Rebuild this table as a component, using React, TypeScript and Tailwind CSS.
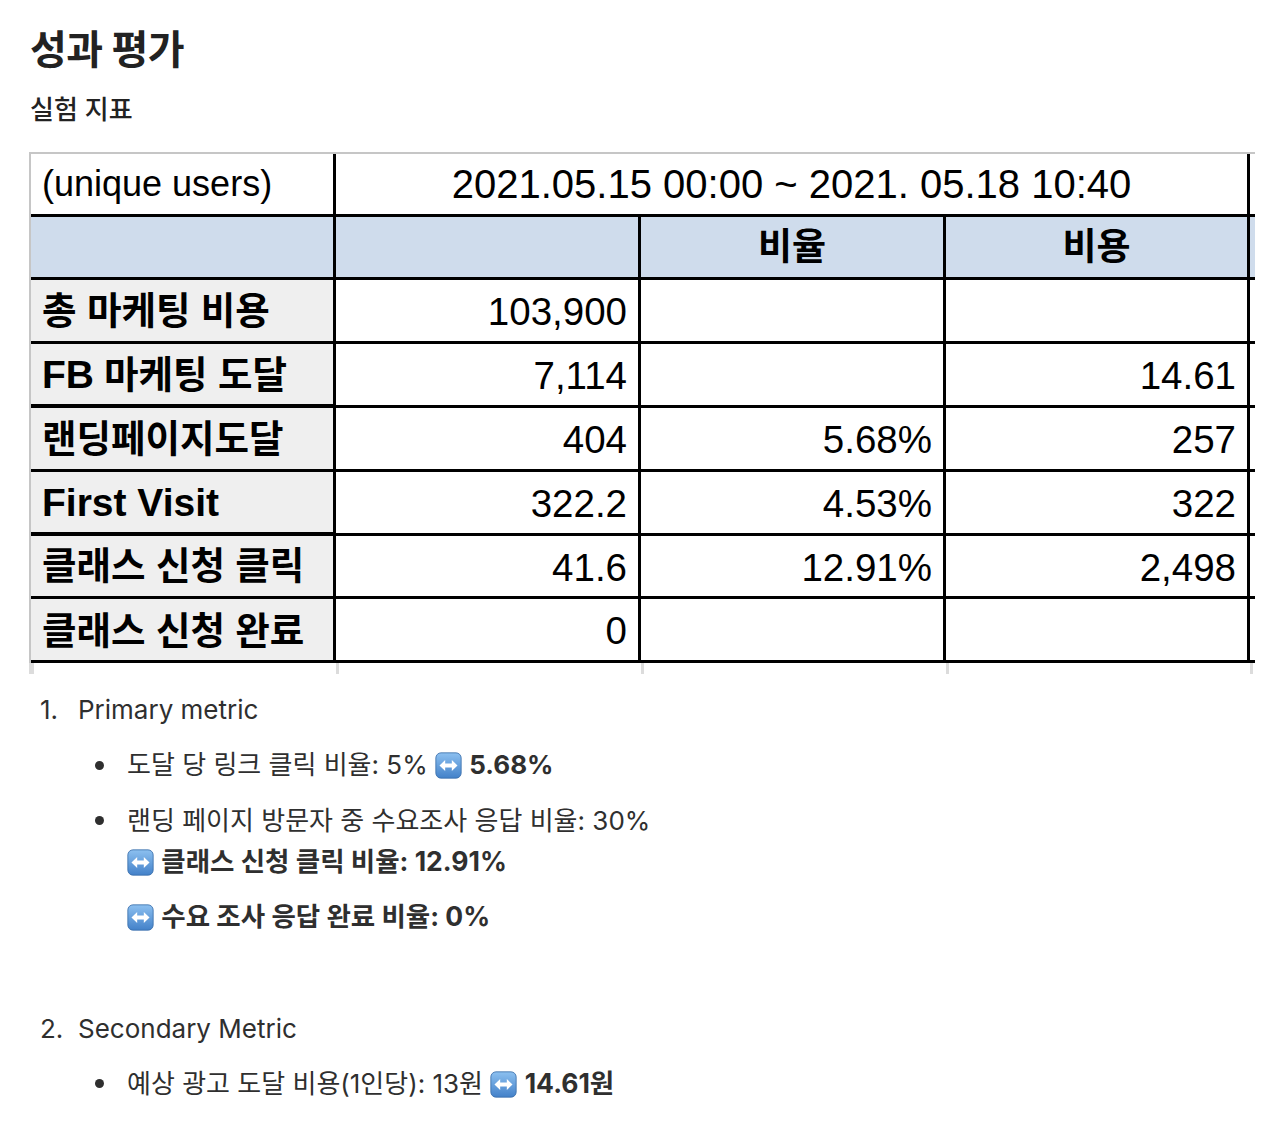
import React from 'react'

const body = { fontFamily: 'Inter, "Noto Sans CJK KR", sans-serif' }
const sheet = { fontFamily: '"Liberation Sans", "Noto Sans CJK KR", Arial, sans-serif' }

function SwapIcon() {
  return (
    <svg viewBox="0 0 26 26" className="inline-block h-[27px] w-[27px] align-[-5px]">
      <defs>
        <linearGradient id="swapBlue" x1="0" y1="0" x2="0" y2="1">
          <stop offset="0" stopColor="#8cc0f0" />
          <stop offset="1" stopColor="#4381c9" />
        </linearGradient>
      </defs>
      <rect x="0.8" y="0.8" width="24.4" height="24.4" rx="5" fill="url(#swapBlue)" stroke="#3a6eab" strokeWidth="0.8" />
      <path d="M4.3 13 L9.8 7.8 V11.1 H16.2 V7.8 L21.7 13 L16.2 18.2 V14.9 H9.8 V18.2 Z" fill="#fff" />
    </svg>
  )
}

const rows: { label: React.ReactNode; a: string; b: string; c: string }[] = [
  { label: '총 마케팅 비용', a: '103,900', b: '', c: '' },
  {
    label: (
      <>
        <span className="mr-[10px] text-[39px]">FB</span>
        <span>마케팅 도달</span>
      </>
    ),
    a: '7,114',
    b: '',
    c: '14.61',
  },
  { label: '랜딩페이지도달', a: '404', b: '5.68%', c: '257' },
  { label: <span className="text-[39px]">First Visit</span>, a: '322.2', b: '4.53%', c: '322' },
  { label: '클래스 신청 클릭', a: '41.6', b: '12.91%', c: '2,498' },
  { label: '클래스 신청 완료', a: '0', b: '', c: '' },
]

const rowHeights = ['h-[61px]', 'h-[60px]', 'h-[61px]', 'h-[60px]', 'h-[60px]', 'h-[61px]']

function Num({ v }: { v: string }) {
  return (
    <div className="flex items-center justify-end bg-white pr-[11px] pt-[3px] text-[38.5px] text-black">{v}</div>
  )
}

function MetricsSheet() {
  return (
    <div className="ml-[-1px] w-[1226px]" style={sheet}>
      <div className="border-l-2 border-t-2 border-[#c6c6c6]">
        <div className="grid grid-cols-[302px_302px_302px_301px_5px] gap-[3px] bg-black pb-[3px]">
          <div className="flex h-[60px] items-center bg-white pl-[11px] text-[36px] text-black">(unique users)</div>
          <div className="col-span-3 flex items-center justify-center bg-white text-[40px] text-black">
            2021.05.15 00:00 ~ 2021. 05.18 10:40
          </div>
          <div className="bg-white" />

          <div className="h-[60px] bg-[#cfdcec]" />
          <div className="bg-[#cfdcec]" />
          <div className="flex items-center justify-center bg-[#cfdcec] pt-[2px] text-[37px] font-bold text-black">
            비율
          </div>
          <div className="flex items-center justify-center bg-[#cfdcec] pt-[2px] text-[37px] font-bold text-black">
            비용
          </div>
          <div className="bg-[#cfdcec]" />

          {rows.map((r, i) => (
            <React.Fragment key={i}>
              <div
                className={`flex items-center whitespace-nowrap bg-[#efefef] pl-[11px] pt-[2px] text-[37.5px] font-bold text-black ${rowHeights[i]}`}
              >
                {r.label}
              </div>
              <Num v={r.a} />
              <Num v={r.b} />
              <Num v={r.c} />
              <div className="bg-white" />
            </React.Fragment>
          ))}
        </div>
      </div>
      <div className="grid h-[11px] grid-cols-[2px_302px_302px_302px_301px_5px] gap-[3px] bg-[#dcdcdc]">
        <div className="bg-[#dcdcdc]" />
        <div className="bg-white" />
        <div className="bg-white" />
        <div className="bg-white" />
        <div className="bg-white" />
        <div className="bg-white" />
      </div>
    </div>
  )
}

function Dot({ top }: { top: string }) {
  return (
    <div className="flex w-[49px] shrink-0 justify-start pl-[17px]">
      <span className={`h-[9px] w-[9px] rounded-full bg-[#2f2f2f] ${top}`} />
    </div>
  )
}

export default function App() {
  return (
    <div className="min-h-[1121px] bg-white pl-[30px] pt-[26px] text-[#2f2f2f]" style={body}>
      <h1 className="text-[40px] font-bold leading-[48px] tracking-[-0.5px] text-[#222]">성과 평가</h1>
      <p className="mt-[19px] text-[26px] font-medium leading-[34px] text-[#222]">실험 지표</p>

      <div className="mt-[25px]">
        <MetricsSheet />
      </div>

      <div className="pl-[10px] text-[26px]">
        <div className="mt-[19px] flex leading-[34px]">
          <span className="w-[38px] shrink-0">1.</span>
          <span>Primary metric</span>
        </div>

        <div className="pl-[38px]">
          <div className="mt-[21px] flex leading-[34px]">
            <Dot top="mt-[13px]" />
            <div>
              도달 당 링크 클릭 비율: 5% <SwapIcon /> <b className="font-bold">5.68%</b>
            </div>
          </div>

          <div className="mt-[18px] flex leading-[41px]">
            <Dot top="mt-[16px]" />
            <div>
              <p>
                랜딩 페이지 방문자 중 수요조사 응답 비율: 30%
                <br />
                <SwapIcon /> <b className="text-[26.5px] font-bold">클래스 신청 클릭 비율: 12.91%</b>
              </p>
              <p className="mt-[14px]">
                <SwapIcon /> <b className="text-[26.5px] font-bold">수요 조사 응답 완료 비율: 0%</b>
              </p>
            </div>
          </div>
        </div>

        <div className="mt-[75px] flex leading-[34px]">
          <span className="w-[38px] shrink-0">2.</span>
          <span>Secondary Metric</span>
        </div>

        <div className="pl-[38px]">
          <div className="mt-[20px] flex leading-[34px]">
            <Dot top="mt-[13px]" />
            <div>
              예상 광고 도달 비용(1인당): 13원 <SwapIcon /> <b className="text-[26.5px] font-bold">14.61원</b>
            </div>
          </div>
        </div>
      </div>
    </div>
  )
}
